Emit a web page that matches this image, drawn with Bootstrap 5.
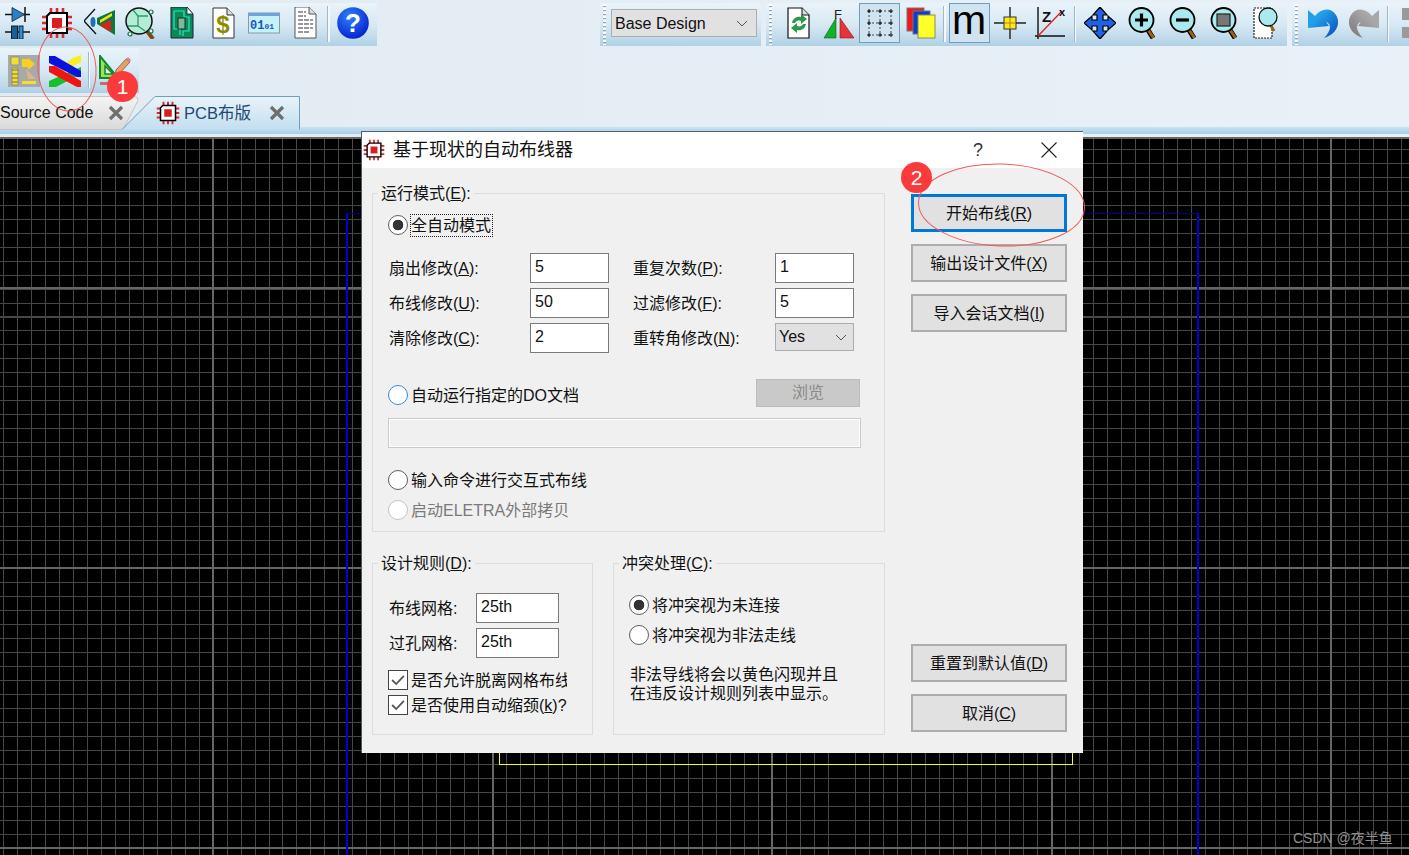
<!DOCTYPE html>
<html lang="zh-CN">

<head>
    <meta charset="utf-8">
    <title>PCB布版</title>
    <link rel="stylesheet" href="https://cdn.jsdelivr.net/npm/bootstrap@5.3.0/dist/css/bootstrap.min.css">
    <style>
        html, body { margin: 0; height: 855px; overflow: hidden; background: #000; }
        body { font-family: "Liberation Sans", "Noto Sans CJK SC", sans-serif; font-size: 16px; color: #111; }
        .app-shell { width: 1409px; height: 855px; position: relative; overflow: hidden; }

        /* top chrome */
        .top-area { height: 137px; background: linear-gradient(90deg, #e2eaf2, #e9f1f8); padding-top: 3px; }
        .tool-row { height: 43px; }
        .tool-row2 { height: 45px; margin-top: 2px; }
        .tool-group { background: linear-gradient(#e9f3fa, #d8e9f4 50%, #b0d1e5); height: 43px; position: relative; flex: none; }
        .tool-row2 .tool-group { height: 45px; }
        .tool-a { margin-left: -3px; width: 380px; }
        .tool-b { margin-left: 223px; width: 161px; padding-left: 11px; }
        .tool-c { margin-left: 5px; width: 521px; padding-left: 11px; }
        .tool-d { margin-left: 5px; width: 117px; padding-left: 10.5px; }
        .tool-e { width: 139px; padding-left: 3.5px; }
        .tool-grip { position: absolute; left: 3px; top: 1px; bottom: 1px; width: 3px;
            background: repeating-linear-gradient(#fff 0 2px, #8fa9bb 2px 3px, transparent 3px 4px); }
        .tool-btn { width: 41px; height: 40px; flex: none; display: flex; align-items: center; justify-content: center; }
        .tool-btn svg { width: 32px; height: 32px; display: block; }
        .tool-on { background: #cfe3f1; box-shadow: inset 0 0 0 1px #6f9fbd; }
        .chip-nudge { margin-right: 3px; }
        .tool-sep { width: 7.5px; height: 36px; margin-top: 3px; flex: none; position: relative; }
        .tool-sep::after { content: ""; position: absolute; left: 3px; top: 0; bottom: 0; width: 1.5px; background: #f4f8fb; box-shadow: -1px 0 #9fb8c8; }
        .tool-row2 .tool-btn { height: 45px; }
        .tool-row2 .tool-sep { margin-top: 4px; width: 9px; }
        .m-glyph { font: 400 41px/46px "Liberation Sans", sans-serif; color: #000; margin-top: -6px; }
        .combo-box { width: 146px; height: 28px; margin-top: 6px; background: #e1e1e1; border: 1px solid #adadad;
            font-size: 16px; line-height: 25px; padding-left: 3px; color: #111; }

        /* tabs */
        .tab-strip { height: 38px; margin-top: 3px; position: relative; }
        .tab-base { position: absolute; left: 0; right: 0; bottom: 0; height: 7px; background: linear-gradient(#c8e2f1, #a9cfe6); }
        .pcb-tab { position: absolute; top: 0; height: 34px; display: flex; align-items: center; }
        .tab-shape { position: absolute; left: 0; top: 0; width: 100%; height: 100%; }
        .tab-src { left: 0; width: 157px; }
        .tab-pcb { left: 122px; width: 178px; }
        .tab-label { position: relative; font-size: 16px; white-space: nowrap; }
        .tab-x { position: relative; width: 16px; height: 16px; flex: none; }
        .tab-pcb .tab-label { color: #1e4a72; font-size: 16.5px; }
        .tab-pcb svg.tab-chip { position: relative; width: 24px; height: 24px; flex: none; }

        /* canvas */
        .pcb-canvas { height: 718px; position: relative; background-color: #000;
            background-image:
                repeating-linear-gradient(90deg, transparent 0 212px, #666 212px 214px, transparent 214px 279.5px),
                repeating-linear-gradient(180deg, transparent 0 150px, #666 150px 152px, transparent 152px 280px),
                linear-gradient(#666 0 2px, transparent 2px),
                repeating-linear-gradient(90deg, transparent 0 3px, #474747 3px 4px, transparent 4px 13.975px),
                repeating-linear-gradient(180deg, transparent 0 11.8px, #474747 11.8px 12.8px, transparent 12.8px 13.975px); }
        .board-blue { position: absolute; left: 346px; top: 76px; width: 853px; bottom: 0;
            border: 2px solid #0000d0; border-top: 1px solid #00008c; border-bottom: 0; }
        .board-yellow { position: absolute; left: 499px; width: 574px; top: 500px; height: 128px;
            border: 1px solid #ffff00; border-top: 0; }
        .csdn-mark { position: absolute; left: 1293px; top: 691px; font-size: 14px; line-height: 20px; color: #8f8f8f; white-space: nowrap; }

        /* dialog window */
        .route-dialog { position: absolute; left: 361px; top: 131px; width: 722px; height: 622px; background: #f0f0f0;
            border-top: 1px solid #4d6272; border-left: 1px solid #4d5a63; display: flex; flex-direction: column; }
        .dlg-title { height: 36px; background: #fff; flex: none; position: relative; font-size: 18px; color: #111; padding-left: 1px; }
        .dlg-title svg.title-chip { width: 22px; height: 22px; flex: none; }
        .dlg-help { position: absolute; left: 611px; top: 5px; font-size: 18px; line-height: 26px; color: #333; }
        .dlg-close { position: absolute; left: 679px; top: 10px; width: 16px; height: 16px; }
        .dlg-body { flex: 1; display: flex; padding: 13px 16px 18px 10px; gap: 26px; }
        .dlg-left { width: 513px; flex: none; }
        .dlg-right { width: 156px; flex: none; padding-top: 13px; padding-bottom: 3px; }
        .win-group { border: 1px solid #dcdcdc; margin: 0; min-width: 0; padding: 0 22px 0 15px; }
        .win-group legend { float: none; width: auto; font-size: 16px; line-height: 24px; margin: 0 0 0 -10px; padding: 1px 3px 0; height: 24px; color: #111; }
        .win-radio { height: 22px; display: flex; align-items: center; white-space: nowrap; }
        .win-radio > span { padding-top: 2px; }
        .win-radio .form-check-input, .win-check .form-check-input { width: 20px; height: 20px; margin: 0 3px 0 0; flex: none; float: none;
            background-color: #fff; border: 1.5px solid #5e5e5e; box-shadow: none; }
        .win-radio .form-check-input:checked { background-color: #fff; background-image: radial-gradient(circle, #333 0 5px, transparent 5.6px); border-color: #5e5e5e; }
        .win-radio .form-check-input.is-hot { border-color: #2a8fe0; }
        .win-radio .form-check-input:disabled { opacity: 1; border-color: #c4c4c4; }
        .win-radio .is-off { color: #7a7a7a; }
        .win-check .form-check-input { border-radius: 0; }
        .win-radio > .focus-label { outline: 1px dotted #222; outline-offset: 0; line-height: 21px; padding: 0 1px 0 0; }
        .field-grid { display: grid; grid-template-columns: 142px 79px 23px 143px 79px; row-gap: 5px; margin-top: 17px; align-items: center; }
        .win-input { height: 30px; width: 100%; background: #fff; border: 1px solid #7a7a7a; padding: 1px 4px 5px; font-size: 16px; line-height: 23px; color: #111; }
        .win-select { height: 28px; margin-bottom: 2px; background: #e1e1e1; border: 1px solid #adadad; font-size: 16px; line-height: 26px; padding-left: 3px; display: flex; justify-content: space-between; align-items: center; padding-right: 6px; }
        .field-label { white-space: nowrap; padding: 2px 0 0 1px; }
        .browse-btn { width: 104px; height: 28px; margin-right: 2px; background: #c9c9c9; border: 1px solid #bcbcbc; color: #8a8a8a; font-size: 16px; line-height: 26px; text-align: center; }
        .path-box { height: 30px; width: 473px; background: #f0f0f0; border: 1px solid #cacaca; box-shadow: inset 0 0 0 1px #fff; }
        .rule-grid { display: grid; grid-template-columns: 88px 83px; row-gap: 5px; padding-top: 18px; align-items: center; }
        .rule-grid .win-input { width: 83px; }
        .win-check { height: 20px; display: flex; align-items: center; width: 179px; overflow: hidden; white-space: nowrap; }
        .win-check .form-check-input:checked { background-color: #fff; border-color: #444;
            background-image: url("data:image/svg+xml,%3csvg xmlns='http://www.w3.org/2000/svg' viewBox='0 0 20 20'%3e%3cpath fill='none' stroke='%23555' stroke-width='2' d='M3.5 10l4.5 4.5 8.5-9'/%3e%3c/svg%3e"); }
        .win-check > span { padding-top: 2px; line-height: 18px; }
        .win-btn { display: block; width: 156px; height: 38px; padding: 1px 0 0; border-radius: 0; background: #e1e1e1; border: 2px solid #adadad; color: #111; font-size: 16px; line-height: 32px; }
        .win-btn.is-focus { border: 3px solid #0078d7; line-height: 30px; }
        .note-text { line-height: 19px; margin-top: 19px; white-space: nowrap; padding-left: 1px; }

        /* red marks */
        .mark-ring { position: absolute; overflow: visible; pointer-events: none; }
        .mark-num { position: absolute; width: 31px; height: 31px; background: #f93b3b; color: #fff; font-size: 21px; line-height: 31px; text-align: center; }
    </style>
</head>

<body>
    <svg width="0" height="0" class="position-absolute">
        <symbol id="chip" viewBox="0 0 32 32">
            <path d="M10 1v5M16 1v5M22 1v5M10 26v5M16 26v5M22 26v5M1 10h5M1 16h5M1 22h5M26 10h5M26 16h5M26 22h5" stroke="#e2262c" stroke-width="2.6" />
            <path d="M9 6h17v20H6V9z" fill="#fff" stroke="#000" stroke-width="2" />
            <rect x="11" y="11" width="10" height="10" fill="#d81e1e" />
        </symbol>
        <symbol id="lens" viewBox="0 0 32 32">
            <path d="M23 23l5 8" stroke="#000" stroke-width="5" />
            <path d="M23.500 23.500l5 7.500" stroke="#a0610f" stroke-width="3" />
            <circle cx="16.500" cy="13" r="12" fill="#a9eaee" stroke="#000" stroke-width="1.800" />
        </symbol>
    </svg>

    <div class="app-shell">
        <div class="top-area">
            <div class="tool-row d-flex">
                <div class="tool-group tool-a d-flex">
                    <div class="tool-btn">
                        <svg viewBox="0 0 32 32"><path d="M3 7.500h25M3 25h25M23 0v15" stroke="#111" stroke-width="1.500" fill="none" /><path d="M10 .5v14L22.500 7.500z" fill="#2a7fc8" stroke="#123" stroke-width=".8" /><rect x="9.500" y="19" width="6" height="13" fill="#1c5d96" stroke="#123" /><rect x="17" y="19" width="4" height="13" fill="#2e8fd6" stroke="#123" /></svg>
                    </div>
                    <div class="tool-btn"><svg class="chip-nudge"><use href="#chip" /></svg></div>
                    <div class="tool-btn">
                        <svg viewBox="0 0 32 32"><path d="M11 2L0 14l12 13" fill="none" stroke="#111" stroke-width="1.300" /><ellipse cx="9" cy="15" rx="2.500" ry="5" fill="#1d6fb8" /><path d="M13 11L31 3v25L13 17z" fill="#0a7a3c" /><path d="M16 13l12-7v3l-12 7z" fill="#f2e21a" /><path d="M16 18l11-5v12z" fill="#e01f1f" /></svg>
                    </div>
                    <div class="tool-btn">
                        <svg viewBox="0 0 32 32"><path d="M22 24l6 8" stroke="#7a4a10" stroke-width="4" /><circle cx="14" cy="14" r="13" fill="#b4ecd8" stroke="#111" stroke-width="1.500" /><path d="M8 3l5 6h10M13 9v10H3M13 19l7 5" fill="none" stroke="#2b9c6a" stroke-width="1.300" /><circle cx="26" cy="5" r="2" fill="#fff" stroke="#14754a" stroke-width="1.200" /><circle cx="5" cy="27" r="2" fill="#fff" stroke="#14754a" stroke-width="1.200" /><circle cx="26" cy="24" r="2" fill="#fff" stroke="#14754a" stroke-width="1.200" /></svg>
                    </div>
                    <div class="tool-btn">
                        <svg viewBox="0 0 32 32"><path d="M5 0h16l6 7v24H5z" fill="#0c8a55" stroke="#123" /><path d="M21 0v7h6z" fill="#fff" stroke="#123" stroke-width=".8" /><path d="M8 4h10v6h5v14h-6v5M8 4v18h6v6" fill="none" stroke="#2fe0d0" stroke-width="1.200" /><rect x="12" y="11" width="7" height="11" fill="#7fb69c" stroke="#08331f" /></svg>
                    </div>
                    <div class="tool-btn">
                        <svg viewBox="0 0 32 32"><path d="M6 1h14l7 7v23H6z" fill="#fff" stroke="#333" /><path d="M20 1v7h7" fill="#ddd" stroke="#333" /><text x="16" y="26" text-anchor="middle" font-family="Liberation Sans" font-weight="700" font-size="24" fill="#8c8c00">$</text></svg>
                    </div>
                    <div class="tool-btn">
                        <svg viewBox="0 0 32 32"><rect x=".5" y="6" width="31" height="20" fill="#c4f2f6" stroke="#8a9aa2" /><rect x=".5" y="6" width="31" height="3" fill="#6fa3d8" /><text x="2" y="22" font-family="Liberation Mono" font-weight="700" font-size="12" fill="#1c55c0">01<tspan font-size="8">01</tspan></text></svg>
                    </div>
                    <div class="tool-btn">
                        <svg viewBox="0 0 32 32"><path d="M6 0h14l7 7v24H6z" fill="#fff" stroke="#555" /><path d="M20 0v7h7" fill="#ddd" stroke="#555" /><path d="M9 5h8M9 9h8M9 13h15M9 17h15M9 21h15M9 25h12" stroke="#777" stroke-width="1.300" stroke-dasharray="5 1" /></svg>
                    </div>
                    <div class="tool-sep"></div>
                    <div class="tool-btn">
                        <svg viewBox="0 0 32 32"><defs><radialGradient id="helpBlue" cx=".4" cy=".3" r=".8"><stop offset="0" stop-color="#2f80ff" /><stop offset="1" stop-color="#0018c8" /></radialGradient></defs><circle cx="16" cy="16" r="15.800" fill="url(#helpBlue)" /><text x="16" y="25" text-anchor="middle" font-family="Liberation Sans" font-weight="700" font-size="26" fill="#fff">?</text></svg>
                    </div>
                </div>

                <div class="tool-group tool-b">
                    <div class="tool-grip"></div>
                    <div class="combo-box d-flex justify-content-between align-items-center pe-2">Base Design
                        <svg width="12" height="7" viewBox="0 0 12 7"><path d="M1 1l5 5 5-5" fill="none" stroke="#555" /></svg>
                    </div>
                </div>

                <div class="tool-group tool-c d-flex">
                    <div class="tool-grip"></div>
                    <div class="tool-btn">
                        <svg viewBox="0 0 32 32"><path d="M6 1h14l7 7v23H6z" fill="#fff" stroke="#111" stroke-width="1.200" /><path d="M20 1v7h7" fill="#ddd" stroke="#111" /><path d="M10 16c1-5 5-7 9-6V7l6 5-6 5v-3c-3-1-5 0-6 2z" fill="#2b9a4d" /><path d="M24 17c-1 5-5 7-9 6v3l-6-5 6-5v3c3 1 5 0 6-2z" fill="#2b9a4d" /></svg>
                    </div>
                    <div class="tool-btn">
                        <svg viewBox="0 0 32 32"><path d="M1 31l12-20v20z" fill="#12b02c" stroke="#0a5a1a" stroke-width=".6" /><path d="M17 11l14 20H17z" fill="#e8323a" stroke="#8a1a1a" stroke-width=".6" /><text x="15" y="12" text-anchor="middle" font-family="Liberation Sans" font-size="13" fill="#222">F</text></svg>
                    </div>
                    <div class="tool-btn tool-on">
                        <svg viewBox="0 0 32 32"><path d="M4 4h24M4 16h24M4 28h24M5 4v24M16 4v24M27 4v24" stroke="#333" stroke-width=".9" stroke-dasharray="2 2" fill="none" /><path d="M3 4h4M14 4h4M25 4h4M3 16h4M14 16h4M25 16h4M3 28h4M14 28h4M25 28h4M5 2v4M16 2v4M27 2v4M5 14v4M16 14v4M27 14v4M5 26v4M16 26v4M27 26v4" stroke="#111" stroke-width="1" /></svg>
                    </div>
                    <div class="tool-btn">
                        <svg viewBox="0 0 32 32"><rect x="2" y="1" width="17" height="23" fill="#f01818" stroke="#777" /><rect x="8" y="4" width="17" height="23" fill="#0a3ed0" stroke="#777" /><rect x="13" y="8" width="17" height="23" fill="#ffff2a" stroke="#8a8a60" /></svg>
                    </div>
                    <div class="tool-sep"></div>
                    <div class="tool-btn tool-on"><span class="m-glyph">m</span></div>
                    <div class="tool-btn">
                        <svg viewBox="0 0 32 32"><path d="M0 16h32M16 0v32" stroke="#222" stroke-width="1.400" /><rect x="10" y="10" width="12" height="12" fill="#ffe81a" stroke="#333" /><path d="M16 10v12M10 16h12" stroke="#8a7a10" stroke-width=".8" /></svg>
                    </div>
                    <div class="tool-btn">
                        <svg viewBox="0 0 32 32"><path d="M3 0v32M0 29h30" stroke="#111" stroke-width="1.400" /><path d="M3 29L27 4" stroke="#e81c1c" stroke-width="1.300" /><text x="7" y="15" font-family="Liberation Sans" font-weight="700" font-size="15" fill="#111">Z</text><text x="24" y="9" font-family="Liberation Sans" font-weight="700" font-size="11" fill="#111">x</text></svg>
                    </div>
                    <div class="tool-sep"></div>
                    <div class="tool-btn">
                        <svg viewBox="0 0 32 32"><path d="M16 0l7 8h-4v5h5V9l8 7-8 7v-4h-5v5h4l-7 8-7-8h4v-5H8v4l-8-7 8-7v4h5V8H9z" fill="#1f62e8" stroke="#000" stroke-width="1.200" /></svg>
                    </div>
                    <div class="tool-btn">
                        <svg viewBox="0 0 32 32"><use href="#lens" /><path d="M10 13h13M16.500 6.500v13" stroke="#000" stroke-width="3.200" /></svg>
                    </div>
                    <div class="tool-btn">
                        <svg viewBox="0 0 32 32"><use href="#lens" /><path d="M10 13h13" stroke="#000" stroke-width="3.200" /></svg>
                    </div>
                    <div class="tool-btn">
                        <svg viewBox="0 0 32 32"><use href="#lens" /><rect x="10" y="7" width="13" height="12" fill="#777" stroke="#222" stroke-width="1.200" /></svg>
                    </div>
                    <div class="tool-btn">
                        <svg viewBox="0 0 32 32"><rect x="6" y="1" width="18" height="30" fill="#fff" stroke="#222" stroke-width="1.200" stroke-dasharray="2 1" /><path d="M22 17l4 7" stroke="#a0610f" stroke-width="3" /><circle cx="20" cy="10" r="9" fill="#a9eaee" stroke="#111" stroke-width="1.300" /></svg>
                    </div>
                </div>

                <div class="tool-group tool-d d-flex">
                    <div class="tool-grip"></div>
                    <div class="tool-btn">
                        <svg viewBox="0 0 32 32"><defs><linearGradient id="undoBlue" x1="0" y1="0" x2="1" y2="1"><stop offset=".3" stop-color="#22a0ea" /><stop offset="1" stop-color="#0a48b0" /></linearGradient></defs><path d="M1 3l7 6C14 1 24 0 29 8c5 8 1 19-12 23 7-7 8-14 2-16l3 4-21 2z" fill="url(#undoBlue)" /></svg>
                    </div>
                    <div class="tool-btn">
                        <svg viewBox="0 0 32 32"><defs><linearGradient id="redoGray" x1="1" y1="0" x2="0" y2="1"><stop offset=".3" stop-color="#a8a8a8" /><stop offset="1" stop-color="#777" /></linearGradient></defs><path d="M31 3l-7 6C18 1 8 0 3 8c-5 8-1 19 12 23-7-7-8-14-2-16l-3 4 21 2z" fill="url(#redoGray)" /></svg>
                    </div>
                    <div class="tool-sep"></div>
                    <div class="tool-btn ms-1">
                        <svg viewBox="0 0 32 32"><rect x="1" y="1" width="30" height="12" fill="#9a9a9a" /><rect x="1" y="20" width="30" height="11" fill="#9a9a9a" /></svg>
                    </div>
                </div>
            </div>

            <div class="tool-row2 d-flex">
                <div class="tool-group tool-e d-flex">
                    <div class="tool-btn">
                        <svg viewBox="0 0 32 32"><rect width="32" height="32" fill="#a9a9a9" /><path d="M3 2h8v8H3zM4 13h6v17H4z" fill="#f0e030" stroke="#777" stroke-width=".6" /><path d="M4 15h6M4 19h6M4 23h6M4 27h6" stroke="#555" stroke-width=".8" /><path d="M14 4h6v-1l7 6-7 6v-3h-6z" fill="#f6d21a" /><path d="M14 26h14v3H14z" fill="#f0e030" /><path d="M18 14l10 10h-8z" fill="#d8b48a" /></svg>
                    </div>
                    <div class="tool-btn">
                        <svg viewBox="0 0 32 32"><path d="M32 0v7L6 21v-7h2L24 3z" fill="#f6ee1e" /><path d="M0 26l32-14v7L7 32H0z" fill="#16c02a" /><path d="M0 1h6l26 15v6h-4L0 8z" fill="#0a12e0" /><path d="M0 11h6l26 15v6h-4L0 17z" fill="#f01414" /></svg>
                    </div>
                    <div class="tool-sep"></div>
                    <div class="tool-btn">
                        <svg viewBox="0 0 32 32"><path d="M1 1v22h18z" fill="#9fe05a" stroke="#0f8a2a" stroke-width="2" /><path d="M6 11v8h8z" fill="#e5eff6" stroke="#0f8a2a" stroke-width="1.500" /><path d="M1 27h19v3H1z" fill="#c9686a" /><path d="M17 15l10-11 4 3-10 11-5 2z" fill="#e8a060" stroke="#555" stroke-width=".7" /><path d="M27 4l2-2 3 3-1 2z" fill="#e88080" /></svg>
                    </div>
                </div>
            </div>

            <div class="tab-strip">
                <div class="tab-base"></div>
                <div class="pcb-tab tab-src">
                    <svg class="tab-shape" viewBox="0 0 157 34" preserveAspectRatio="none"><defs><linearGradient id="srcTab" x1="0" y1="0" x2="0" y2="1"><stop offset="0" stop-color="#f4f4f4" /><stop offset="1" stop-color="#d9d9d9" /></linearGradient></defs><path d="M-1 .5h135q4 0 4 4l-15 29H-1z" fill="url(#srcTab)" stroke="#c5c5c5" /></svg>
                    <span class="tab-label">Source Code</span>
                    <svg class="tab-x" style="margin-left:15px" viewBox="0 0 16 16"><path d="M2 2l12 12M14 2L2 14" stroke="#6e6e6e" stroke-width="3.200" /></svg>
                </div>
                <div class="pcb-tab tab-pcb">
                    <svg class="tab-shape" viewBox="0 0 178 34" preserveAspectRatio="none"><defs><linearGradient id="pcbTab" x1="0" y1="0" x2="0" y2="1"><stop offset="0" stop-color="#e9f3fa" /><stop offset="1" stop-color="#c2dff0" /></linearGradient></defs><path d="M0 33.500L33 .5h144.500v33" fill="url(#pcbTab)" stroke="#6f9fbd" /></svg>
                    <svg class="tab-chip" style="margin-left:34px"><use href="#chip" /></svg>
                    <span class="tab-label ms-1">PCB布版</span>
                    <svg class="tab-x" style="margin-left:18px" viewBox="0 0 16 16"><path d="M2 2l12 12M14 2L2 14" stroke="#6e6e6e" stroke-width="3.200" /></svg>
                </div>
            </div>
        </div>

        <div class="pcb-canvas">
            <div class="board-blue"></div>
            <div class="board-yellow"></div>
            <div class="csdn-mark">CSDN @夜半鱼</div>
        </div>

        <div class="route-dialog">
            <div class="dlg-title d-flex align-items-center gap-2">
                <svg class="title-chip"><use href="#chip" /></svg>
                <span>基于现状的自动布线器</span>
                <span class="dlg-help">?</span>
                <svg class="dlg-close" viewBox="0 0 16 16"><path d="M.5.5l15 15M15.500.5l-15 15" stroke="#222" stroke-width="1.100" /></svg>
            </div>
            <div class="dlg-body">
                <div class="dlg-left">
                    <fieldset class="win-group">
                        <legend>运行模式(<u>E</u>):</legend>
                        <div class="win-radio" style="margin-top:9px">
                            <input class="form-check-input" type="radio" name="runMode" checked>
                            <span class="focus-label">全自动模式</span>
                        </div>
                        <div class="field-grid">
                            <span class="field-label">扇出修改(<u>A</u>):</span>
                            <div class="win-input">5</div>
                            <span></span>
                            <span class="field-label">重复次数(<u>P</u>):</span>
                            <div class="win-input">1</div>
                            <span class="field-label">布线修改(<u>U</u>):</span>
                            <div class="win-input">50</div>
                            <span></span>
                            <span class="field-label">过滤修改(<u>F</u>):</span>
                            <div class="win-input">5</div>
                            <span class="field-label">清除修改(<u>C</u>):</span>
                            <div class="win-input">2</div>
                            <span></span>
                            <span class="field-label">重转角修改(<u>N</u>):</span>
                            <div class="win-select">Yes
                                <svg width="12" height="7" viewBox="0 0 12 7"><path d="M1 1l5 5 5-5" fill="none" stroke="#555" /></svg>
                            </div>
                        </div>
                        <div class="d-flex justify-content-between align-items-center" style="margin-top:26px">
                            <div class="win-radio" style="margin-top:4px">
                                <input class="form-check-input is-hot" type="radio" name="runMode">
                                <span>自动运行指定的DO文档</span>
                            </div>
                            <div class="browse-btn">浏览</div>
                        </div>
                        <div class="path-box" style="margin-top:11px"></div>
                        <div class="win-radio" style="margin-top:21px">
                            <input class="form-check-input" type="radio" name="runMode">
                            <span>输入命令进行交互式布线</span>
                        </div>
                        <div class="win-radio" style="margin-top:8px;margin-bottom:10px">
                            <input class="form-check-input" type="radio" name="runMode" disabled>
                            <span class="is-off">启动ELETRA外部拷贝</span>
                        </div>
                    </fieldset>

                    <div class="d-flex" style="gap:20px;margin-top:19px">
                        <fieldset class="win-group" style="width:221px;padding-right:0">
                            <legend>设计规则(<u>D</u>):</legend>
                            <div class="rule-grid">
                                <span class="field-label">布线网格:</span>
                                <div class="win-input">25th</div>
                                <span class="field-label">过孔网格:</span>
                                <div class="win-input">25th</div>
                            </div>
                            <div class="win-check" style="margin-top:12px">
                                <input class="form-check-input" type="checkbox" checked>
                                <span>是否允许脱离网格布线</span>
                            </div>
                            <div class="win-check" style="margin-top:5px;margin-bottom:19px">
                                <input class="form-check-input" type="checkbox" checked>
                                <span>是否使用自动缩颈(<u>k</u>)?</span>
                            </div>
                        </fieldset>
                        <fieldset class="win-group" style="width:272px">
                            <legend>冲突处理(<u>C</u>):</legend>
                            <div class="win-radio" style="margin-top:19px">
                                <input class="form-check-input" type="radio" name="clash" checked>
                                <span>将冲突视为未连接</span>
                            </div>
                            <div class="win-radio" style="margin-top:8px">
                                <input class="form-check-input" type="radio" name="clash">
                                <span>将冲突视为非法走线</span>
                            </div>
                            <div class="note-text">非法导线将会以黄色闪现并且<br>在违反设计规则列表中显示。</div>
                        </fieldset>
                    </div>
                </div>

                <div class="dlg-right d-flex flex-column">
                    <button class="btn win-btn is-focus">开始布线(<u>R</u>)</button>
                    <button class="btn win-btn" style="margin-top:12px">输出设计文件(<u>X</u>)</button>
                    <button class="btn win-btn" style="margin-top:12px">导入会话文档(<u>I</u>)</button>
                    <button class="btn win-btn mt-auto">重置到默认值(<u>D</u>)</button>
                    <button class="btn win-btn" style="margin-top:12px">取消(<u>C</u>)</button>
                </div>
            </div>
        </div>

        <svg class="mark-ring" style="left:37px;top:27px" width="60" height="84" viewBox="0 0 60 84"><ellipse cx="30" cy="42" rx="29" ry="42" transform="rotate(-4 30 42)" fill="none" stroke="#ef5a5a" /></svg>
        <div class="mark-num rounded-circle" style="left:107px;top:71px">1</div>
        <svg class="mark-ring" style="left:918px;top:163px" width="167" height="84" viewBox="0 0 167 84"><ellipse cx="83.500" cy="42" rx="83" ry="41" transform="rotate(2 83.500 42)" fill="none" stroke="#ef5a5a" /></svg>
        <div class="mark-num rounded-circle" style="left:901px;top:162px">2</div>
    </div>

    <script src="https://cdn.jsdelivr.net/npm/bootstrap@5.3.0/dist/js/bootstrap.bundle.min.js"></script>
</body>

</html>
